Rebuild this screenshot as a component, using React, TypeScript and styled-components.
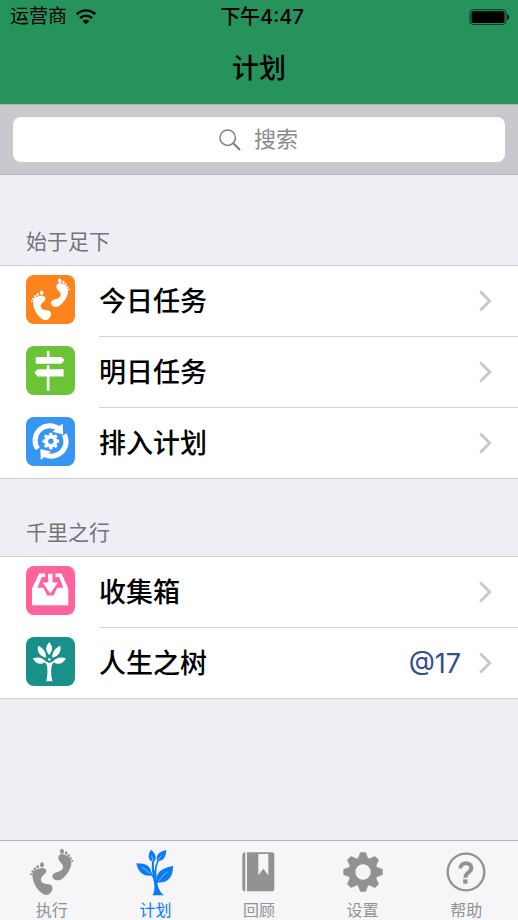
import React from "react";
import styled, { createGlobalStyle } from "styled-components";

const GlobalStyle = createGlobalStyle`
  *, *::before, *::after { box-sizing: border-box; }
  body {
    margin: 0;
    background: #efeef4;
    color: #000;
    font-family: Inter, "Noto Sans CJK SC", sans-serif;
  }
`;

const Screen = styled.div`
  display: flex;
  flex-direction: column;
  min-height: 100vh;
`;

const Header = styled.header`
  background: #26935d;
  border-bottom: 1px solid #a9b5b2;
`;

const StatusBar = styled.div`
  display: grid;
  grid-template-columns: 1fr auto 1fr;
  align-items: center;
  height: 34px;
  padding: 0 8px 0 10px;
  font-size: 19px;
  line-height: 34px;
`;

const Carrier = styled.span`
  display: flex;
  align-items: center;
  gap: 9px;
`;

const Clock = styled.time`
  padding-left: 4px;
  font-size: 20px;
  font-weight: 500;
`;

const BatterySlot = styled.span`
  display: flex;
  justify-content: flex-end;
`;

const Title = styled.h1`
  margin: 0;
  height: 70px;
  font-size: 27px;
  font-weight: 500;
  line-height: 70px;
  text-align: center;
`;

const SearchBar = styled.form`
  padding: 12px 13px;
  background: #c9c8ce;
  border-bottom: 1px solid #b7b6bc;
`;

const SearchField = styled.label`
  display: flex;
  align-items: center;
  justify-content: center;
  gap: 13px;
  height: 45px;
  border-radius: 8px;
  background: #fff;
`;

const SearchInput = styled.input`
  width: 45px;
  height: 43px;
  margin-bottom: 2px;
  padding: 0;
  border: 0;
  outline: 0;
  background: transparent;
  color: #000;
  font: inherit;
  font-size: 22px;
  &::placeholder {
    color: #8a8a90;
    opacity: 1;
  }
  &:focus {
    width: 70%;
  }
`;

const Main = styled.main`
  flex: 1;
`;

const SectionTitle = styled.h2<{ $first?: boolean }>`
  display: flex;
  align-items: flex-end;
  margin: 0;
  height: ${(p) => (p.$first ? 90 : 77)}px;
  padding: 0 26px 7px;
  color: #737378;
  font-size: 21px;
  font-weight: 400;
  line-height: 32px;
`;

const Group = styled.ul`
  margin: 0;
  padding: 0;
  list-style: none;
  background: #fff;
  border-top: 1px solid #d0cfd5;
  border-bottom: 1px solid #d0cfd5;
`;

const RowBody = styled.span`
  display: flex;
  flex: 1;
  align-items: center;
  height: 71px;
  padding-right: 26px;
  border-bottom: 1px solid #d3d2d7;
`;

const RowItem = styled.li`
  &:last-child ${RowBody} {
    height: 70px;
    border-bottom: 0;
  }
`;

const RowLink = styled.a`
  display: flex;
  align-items: flex-start;
  gap: 24px;
  padding-left: 26px;
  color: #000;
  text-decoration: none;
`;

const Tile = styled.span<{ $color: string }>`
  display: flex;
  flex: none;
  margin-top: 9px;
  width: 49px;
  height: 49px;
  border-radius: 8px;
  background: ${(p) => p.$color};
`;

const RowLabel = styled.span`
  flex: 1;
  padding-bottom: 3px;
  font-size: 27px;
  font-weight: 500;
`;

const Badge = styled.span`
  margin-right: 18px;
  color: #2f4f93;
  font-size: 27px;
  font-weight: 400;
`;

const TabBar = styled.nav`
  display: flex;
  height: 80px;
  border-top: 1px solid #b3b2b7;
  background: #f6f6f8;
`;

const Tab = styled.a<{ $active?: boolean }>`
  display: flex;
  flex: 1;
  flex-direction: column;
  align-items: center;
  gap: 2px;
  padding-top: 5px;
  color: ${(p) => (p.$active ? "#0a7cf8" : "#929292")};
  font-size: 16px;
  line-height: 20px;
  text-decoration: none;
`;

const TabIcon = styled.span`
  display: flex;
  align-items: center;
  justify-content: center;
  height: 52px;
`;

const WifiIcon = () => (
  <svg width="20" height="16" viewBox="229 25 60 48" fill="none" stroke="#000" strokeWidth="7" aria-hidden="true">
    <path d="M231 40 Q259 18 287 40" />
    <path d="M241 52 Q259 38 277 52" />
    <path d="M249 61 Q259 54 269 61 L259 71Z" fill="#000" stroke="none" />
  </svg>
);

const BatteryIcon = () => (
  <svg width="41" height="16" viewBox="0 0 41 16" aria-hidden="true">
    <rect x="1" y="0.8" width="36" height="14.6" rx="3" fill="none" stroke="#0b2f1d" strokeWidth="1" />
    <rect x="2.5" y="2.3" width="33" height="11.6" rx="1.5" />
    <path d="M38.3 5.2 C40.8 6 40.8 10.2 38.3 11Z" />
  </svg>
);

const SearchIcon = () => (
  <svg width="22" height="22" viewBox="0 0 22 22" fill="none" stroke="#808086" aria-hidden="true">
    <circle cx="8.7" cy="8.7" r="7.7" strokeWidth="1.5" />
    <path d="M14.3 14.3 L21 21" strokeWidth="2.2" />
  </svg>
);

const Chevron = () => (
  <svg width="13" height="22" viewBox="0 0 13 22" fill="none" stroke="#c7c7cc" strokeWidth="2.8" aria-hidden="true">
    <path d="M1.2 1.5 L10.8 11 L1.2 20.5" />
  </svg>
);

const FeetShapes = () => (
  <>
    <path d="M96 114 C97 102 112 98 124 96 C134 95 140 102 137 109 C132 117 121 122 122 132 C123 142 134 144 146 145 C157 147 159 157 154 166 C148 176 138 180 130 175 C114 167 95 140 96 114Z" />
    <ellipse cx="125" cy="86" rx="6" ry="7.5" />
    <ellipse cx="112" cy="92" rx="4" ry="5" />
    <circle cx="103.5" cy="98.5" r="4" />
    <circle cx="97" cy="106" r="3.5" />
    <circle cx="92" cy="114.5" r="3" />
    <path d="M174 64 C175 54 186 52 194 56 C205 61 214 70 213 82 C212 99 199 119 184 130 C176 135 161 133 157 125 C153 114 163 110 174 107 C185 104 191 97 187 88 C184 80 173 75 174 64Z" />
    <ellipse cx="185" cy="46" rx="6" ry="7.5" />
    <ellipse cx="197.5" cy="51" rx="4" ry="5" />
    <circle cx="205" cy="59" r="4" />
    <circle cx="211" cy="67" r="3.5" />
    <circle cx="216" cy="75" r="3" />
  </>
);

const TileFeet = () => (
  <svg width="49" height="49" viewBox="73 27 163 163" fill="#fff" aria-hidden="true">
    <FeetShapes />
  </svg>
);

const TileSign = () => (
  <svg width="49" height="49" viewBox="48 33 146 146" fill="#fff" aria-hidden="true">
    <path d="M110 66 V48 H118 V66 H154 L163 75 L154 86 H77 V66Z" />
    <path d="M110 102 V90 H118 V102 H160 V124 H118 V166 H110 V124 H82 L73 113 L82 102Z" />
  </svg>
);

type GearProps = { cx: number; cy: number; outer: number; body: number; hole: number };

const GearShape = ({ cx, cy, outer, body, hole }: GearProps) => {
  const tip = outer * 0.16;
  const base = outer * 0.27;
  const round = outer * 0.05;
  return (
    <g transform={`translate(${cx} ${cy})`}>
      <circle r={(body + hole) / 2} fill="none" stroke="currentColor" strokeWidth={body - hole} />
      {[0, 45, 90, 135, 180, 225, 270, 315].map((angle) => (
        <path
          key={angle}
          transform={`rotate(${angle})`}
          fill="currentColor"
          d={`M${-base} ${-body * 0.88} L${-tip} ${-outer + round} Q${-tip} ${-outer} ${-tip + round} ${-outer} H${tip - round} Q${tip} ${-outer} ${tip} ${-outer + round} L${base} ${-body * 0.88}Z`}
        />
      ))}
    </g>
  );
};

const TileCycle = () => (
  <svg width="49" height="49" viewBox="48 36 146 146" color="#fff" aria-hidden="true">
    <g fill="none" stroke="#fff" strokeWidth="15">
      <path d="M83 131 A44 44 0 0 1 146 71" />
      <path d="M162 88 A44 44 0 0 1 103 148" />
    </g>
    <g fill="#fff">
      <path d="M157 55 L159 88 L127 80Z" />
      <path d="M92 164 L91 131 L122 139Z" />
    </g>
    <GearShape cx={122} cy={108} outer={25} body={18} hole={8} />
  </svg>
);

const TileInbox = () => (
  <svg width="49" height="49" viewBox="48 33 146 146" fill="#fff" aria-hidden="true">
    <path d="M87 55 H105 V66 H95 L82 98 H100 L111 121 H130 L141 98 H159 L147 66 H136 V55 H154 L174 100 V150 H66 V100Z" />
    <path d="M114 56 H127 V82 H143 L120.5 115 L97 82 H114Z" />
  </svg>
);

const TileTree = () => (
  <svg width="49" height="49" viewBox="48 34 146 146" fill="#fff" aria-hidden="true">
    <path d="M117 50 C106 61 105 74 117 88 C129 74 128 61 117 50Z" />
    <path d="M84 60 C80 78 88 90 108 96 C108 80 101 67 84 60Z" />
    <path d="M150 60 C154 78 146 90 126 96 C126 80 133 67 150 60Z" />
    <path d="M68 98 C78 115 93 119 107 107 C96 95 84 93 68 98Z" />
    <path d="M167 98 C157 115 142 119 128 107 C139 95 151 93 167 98Z" />
    <circle cx="117.5" cy="101" r="4" />
    <path d="M108 166 C112 152 113 137 111 122 Q109 113 102 107 Q112 106 117.5 112 Q123 106 133 107 Q126 113 124 122 C122 137 123 152 127 166Z" />
  </svg>
);

const TabFeet = () => (
  <svg width="46" height="49" viewBox="86 36 138 147" fill="currentColor" aria-hidden="true">
    <FeetShapes />
  </svg>
);

const TabPlant = () => (
  <svg width="40" height="49" viewBox="408 36 120 147" fill="currentColor" aria-hidden="true">
    <path d="M412 82 C432 84 454 79 459 118 C440 123 417 113 412 82Z" />
    <path d="M522 89 C500 96 467 101 474 139 C502 143 524 126 522 89Z" />
    <path d="M456 41 C447 54 444 71 463 79 C475 68 471 53 456 41Z" />
    <path d="M502 42 C485 46 469 53 474 75 C493 77 501 62 502 42Z" />
    <path d="M460 76 H466 C464 90 464 96 467 106 Q468 88 475 73 L479 76 C471 94 471 110 474 132 C476 155 483 170 496 178 H460 C469 166 467 145 462 126 Q459 118 450 112 L454 109 Q459 111 461 116 C458 101 457 90 460 76Z" />
    <path d="M477 137 Q472 142 474 148 L469 140Z" />
    <g fill="none" stroke="#f6f6f8" strokeWidth="1.6">
      <path d="M428 94 Q440 99 453 113" />
      <path d="M506 107 Q491 118 479 135" />
      <path d="M458 59 L462 75" />
      <path d="M489 57 L477 72" />
    </g>
  </svg>
);

const TabBook = () => (
  <svg width="33" height="40" viewBox="98 50 99 120" fill="currentColor" aria-hidden="true">
    <path d="M108 51 V168 Q99 168 99 160 V59 Q99 51 108 51Z" />
    <path fillRule="evenodd" d="M113 51 H188 Q195 51 195 59 V160 Q195 168 188 168 H113Z M147 56 V120 L162 100 L177 120 V56Z" />
  </svg>
);

const TabGear = () => (
  <svg width="40" height="40" viewBox="-60 -60 120 120" aria-hidden="true">
    <GearShape cx={0} cy={0} outer={59} body={44} hole={23} />
  </svg>
);

const TabHelp = () => (
  <svg width="40" height="40" viewBox="-60 -60 120 120" fill="none" stroke="currentColor" aria-hidden="true">
    <circle r="55" strokeWidth="7" />
    <path d="M-17 -11 C-16 -31 16 -31 16 -12 C16 2 -2 1 -2 17" strokeWidth="12" />
    <path d="M-2 22 V35" strokeWidth="13" />
  </svg>
);

type Entry = { label: string; color: string; icon: React.ReactNode; badge?: string };

const sections: { title: string; entries: Entry[] }[] = [
  {
    title: "始于足下",
    entries: [
      { label: "今日任务", color: "#fd841c", icon: <TileFeet /> },
      { label: "明日任务", color: "#6ac436", icon: <TileSign /> },
      { label: "排入计划", color: "#3796f3", icon: <TileCycle /> },
    ],
  },
  {
    title: "千里之行",
    entries: [
      { label: "收集箱", color: "#fe639d", icon: <TileInbox /> },
      { label: "人生之树", color: "#17918a", icon: <TileTree />, badge: "@17" },
    ],
  },
];

const tabs = [
  { label: "执行", icon: <TabFeet /> },
  { label: "计划", icon: <TabPlant />, active: true },
  { label: "回顾", icon: <TabBook /> },
  { label: "设置", icon: <TabGear /> },
  { label: "帮助", icon: <TabHelp /> },
];

export default function App() {
  return (
    <Screen lang="zh-CN">
      <GlobalStyle />
      <Header>
        <StatusBar>
          <Carrier>
            运营商
            <WifiIcon />
          </Carrier>
          <Clock>下午4:47</Clock>
          <BatterySlot>
            <BatteryIcon />
          </BatterySlot>
        </StatusBar>
        <Title>计划</Title>
      </Header>
      <SearchBar role="search" onSubmit={(e) => e.preventDefault()}>
        <SearchField>
          <SearchIcon />
          <SearchInput type="text" placeholder="搜索" aria-label="搜索" />
        </SearchField>
      </SearchBar>
      <Main>
        {sections.map((section, index) => (
          <section key={section.title}>
            <SectionTitle $first={index === 0}>{section.title}</SectionTitle>
            <Group>
              {section.entries.map((entry) => (
                <RowItem key={entry.label}>
                  <RowLink href="#">
                    <Tile $color={entry.color}>{entry.icon}</Tile>
                    <RowBody>
                      <RowLabel>{entry.label}</RowLabel>
                      {entry.badge && <Badge>{entry.badge}</Badge>}
                      <Chevron />
                    </RowBody>
                  </RowLink>
                </RowItem>
              ))}
            </Group>
          </section>
        ))}
      </Main>
      <TabBar>
        {tabs.map((tab) => (
          <Tab key={tab.label} href="#" $active={tab.active} aria-current={tab.active ? "page" : undefined}>
            <TabIcon>{tab.icon}</TabIcon>
            {tab.label}
          </Tab>
        ))}
      </TabBar>
    </Screen>
  );
}
